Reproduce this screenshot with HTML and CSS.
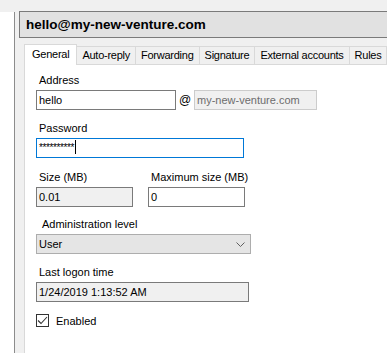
FILE: index.html
```html
<!DOCTYPE html>
<html lang="en">
<head>
    <meta charset="UTF-8">
    <meta name="viewport" content="width=device-width, initial-scale=1.0">
    <title>Account</title>
    <link rel="stylesheet" href="styles.css">
</head>
<body>
    <div class="app">
        <aside class="tree"></aside>

        <main class="pane">
            <div class="title">hello@my-new-venture.com</div>

            <div class="tabs">
                <div class="tab active">General</div>
                <div class="tab">Auto-reply</div>
                <div class="tab">Forwarding</div>
                <div class="tab">Signature</div>
                <div class="tab">External accounts</div>
                <div class="tab">Rules</div>
            </div>

            <section class="panel">
                <label class="label">Address</label>
                <div class="row address-row">
                    <div class="box address">hello</div>
                    <span class="at">@</span>
                    <div class="box domain">my-new-venture.com</div>
                </div>

                <label class="label">Password</label>
                <div class="box password">**********<span class="caret"></span></div>

                <div class="row sizes">
                    <div class="col">
                        <label class="label">Size (MB)</label>
                        <div class="box readonly size">0.01</div>
                    </div>
                    <div class="col">
                        <label class="label">Maximum size (MB)</label>
                        <div class="box size">0</div>
                    </div>
                </div>

                <label class="label indent">Administration level</label>
                <div class="select">
                    <span>User</span>
                    <svg width="9" height="5" viewBox="0 0 9 5">
                        <path d="M0.5 0.5 L4.5 4.5 L8.5 0.5" fill="none" stroke="#606060" stroke-width="1"/>
                    </svg>
                </div>

                <label class="label">Last logon time</label>
                <div class="box readonly logon">1/24/2019 1:13:52 AM</div>

                <div class="check">
                    <span class="checkbox">
                        <svg width="11" height="11" viewBox="0 0 11 11">
                            <path d="M1 5.5 L4 8.5 L10 2" fill="none" stroke="#333" stroke-width="1.1"/>
                        </svg>
                    </span>
                    Enabled
                </div>
            </section>
        </main>
    </div>
</body>
</html>
```

FILE: styles.css
```css
body {
    margin: 0;
    font-family: "Liberation Sans", Arial, sans-serif;
    font-size: 11px;
    color: #000;
    background-color: #f0f0f0;
    height: 353px;
    overflow: hidden;
}

.app {
    display: flex;
    height: 353px;
}

.tree {
    width: 14px;
    margin-top: 12px;
    background-color: #fff;
    border-right: 1px solid #8c8c8c;
}

.pane {
    flex: 1;
    display: flex;
    flex-direction: column;
    padding: 11px 0 0 4px;
    min-width: 0;
}

.title {
    height: 25px;
    line-height: 25px;
    padding-left: 6px;
    background-color: #e1e1e1;
    border: 1px solid #7a7a7a;
    border-right: none;
    font-weight: bold;
    font-size: 13.5px;
    white-space: nowrap;
}

.tabs {
    display: flex;
    align-items: flex-end;
    margin: 6px 0 0 5px;
    height: 20px;
    white-space: nowrap;
    letter-spacing: -0.25px;
}

.tab {
    height: 17px;
    line-height: 17px;
    padding: 0 5px;
    border: 1px solid #d9d9d9;
    border-bottom: none;
    border-left: none;
    background-color: #f0f0f0;
}

.tab.active {
    height: 20px;
    line-height: 19px;
    padding: 0 7px;
    border-left: 1px solid #d9d9d9;
    background-color: #fff;
    margin-bottom: -1px;
    position: relative;
}

.panel {
    flex: 1;
    margin-left: 5px;
    padding: 9px 0 0 11px;
    background-color: #fff;
    border-top: 1px solid #d9d9d9;
    border-left: 1px solid #d9d9d9;
}

.label {
    display: block;
    line-height: 13px;
    padding-left: 3px;
    margin-bottom: 3px;
}

.label.indent {
    padding-left: 6px;
}

.row {
    display: flex;
    align-items: center;
}

.box {
    box-sizing: border-box;
    height: 20px;
    line-height: 18px;
    padding-left: 2px;
    border: 1px solid #7a7a7a;
    background-color: #fff;
    margin-bottom: 13px;
    white-space: nowrap;
}

.row .box {
    margin-bottom: 0;
}

.address-row {
    margin-bottom: 12px;
}

.address {
    width: 140px;
}

.at {
    width: 18px;
    padding-left: 3px;
    box-sizing: border-box;
    font-size: 12px;
}

.domain {
    width: 123px;
    color: #6d6d6d;
    background-color: #f0f0f0;
    border-color: #cccccc;
}

.password {
    width: 208px;
    border-color: #0078d7;
    letter-spacing: -0.4px;
    font-size: 10px;
}

.caret {
    display: inline-block;
    width: 1px;
    height: 14px;
    background-color: #000;
    vertical-align: -3px;
    margin-left: 1px;
}

.sizes {
    align-items: flex-start;
    gap: 15px;
    margin-bottom: 11px;
}

.size {
    width: 97px;
}

.readonly {
    background-color: #f0f0f0;
}

.select {
    box-sizing: border-box;
    width: 215px;
    height: 20px;
    display: flex;
    align-items: center;
    justify-content: space-between;
    padding: 0 5px 0 2px;
    background-color: #e5e5e5;
    border: 1px solid #adadad;
    margin-bottom: 12px;
}

.logon {
    width: 213px;
    margin-bottom: 12px;
}

.check {
    display: flex;
    align-items: center;
    gap: 7px;
    height: 13px;
}

.checkbox {
    box-sizing: border-box;
    width: 13px;
    height: 13px;
    border: 1px solid #333;
    background-color: #fff;
    display: flex;
    align-items: center;
    justify-content: center;
}
```
